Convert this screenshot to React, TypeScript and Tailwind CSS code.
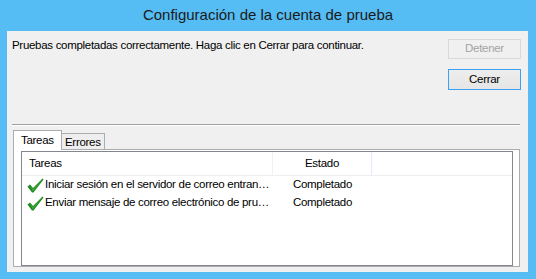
const font = "font-['Liberation_Sans',Arial,sans-serif]";

function Check() {
  return (
    <svg width="17" height="15" viewBox="0 0 17 15" className="shrink-0">
      <polygon points="0.5,8.5 3,6.5 6,10 15.5,0.5 16.5,1.5 6.5,14.5 5,14.5" fill="#1f8a1f" />
      <polygon points="3,7.5 6,11 15.5,1.5 6.3,13 5.5,13" fill="#5cc25c" opacity="0.5" />
    </svg>
  );
}

const rows = [
  "Iniciar sesión en el servidor de correo entran…",
  "Enviar mensaje de correo electrónico de pru…",
];

export default function App() {
  return (
    <div className={`w-[536px] h-[279px] bg-[#55bcf4] flex flex-col ${font} text-black`}>
      <div className="h-[31px] flex items-center justify-center text-[15px] text-[#1b1b1b] pb-px">
        Configuración de la cuenta de prueba
      </div>
      <div className="mx-[7px] mr-[8px] h-[241px] bg-[#f0f0f0] flex flex-col px-[5px] text-[11.5px] tracking-[-0.3px]">
        <div className="h-[93px] flex justify-between">
          <div className="pt-[6px]">
            Pruebas completadas correctamente. Haga clic en Cerrar para continuar.
          </div>
          <div className="flex flex-col gap-[10px] pt-[8px] mr-[2px]">
            <button className="w-[73px] h-[20px] border border-[#d9d9d9] bg-[#f0f0f0] text-[#a3a3a3]">
              Detener
            </button>
            <button className="w-[73px] h-[21px] border border-[#3ca0f5] bg-gradient-to-b from-[#eeeeee] to-[#e5e5e5]">
              Cerrar
            </button>
          </div>
        </div>
        <div className="h-[2px] border-t border-[#a0a0a0] border-b border-b-white mr-[3px]" />
        <div className="flex items-end mt-[3px] ml-px h-[20px]">
          <div className="h-[20px] w-[49px] border border-b-0 border-[#acacac] bg-white pl-[7px] pt-px relative z-10 -mb-px">
            Tareas
          </div>
          <div className="h-[16px] w-[43px] border border-l-0 border-b-0 border-[#acacac] bg-[#eeeeee] pl-[3px]">
            Errores
          </div>
        </div>
        <div className="ml-px mr-[3px] h-[118px] border border-[#acacac] bg-white pt-px pl-[7px] pr-[6px]">
          <div className="h-[115px] border border-[#828790] bg-white">
            <div className="flex h-[24px] border-b border-[#eeeeee]">
              <div className="w-[251px] border-r border-[#eef2f8] pl-[7px] flex items-center">Tareas</div>
              <div className="w-[99px] border-r border-[#e3ecf8] flex items-center justify-center">Estado</div>
            </div>
            {rows.map((r) => (
              <div key={r} className="flex h-[18px] items-center">
                <div className="w-[251px] flex items-center pl-[5px] gap-px whitespace-nowrap overflow-hidden">
                  <Check />
                  <span>{r}</span>
                </div>
                <div className="w-[99px] text-center">Completado</div>
              </div>
            ))}
          </div>
        </div>
      </div>
    </div>
  );
}
